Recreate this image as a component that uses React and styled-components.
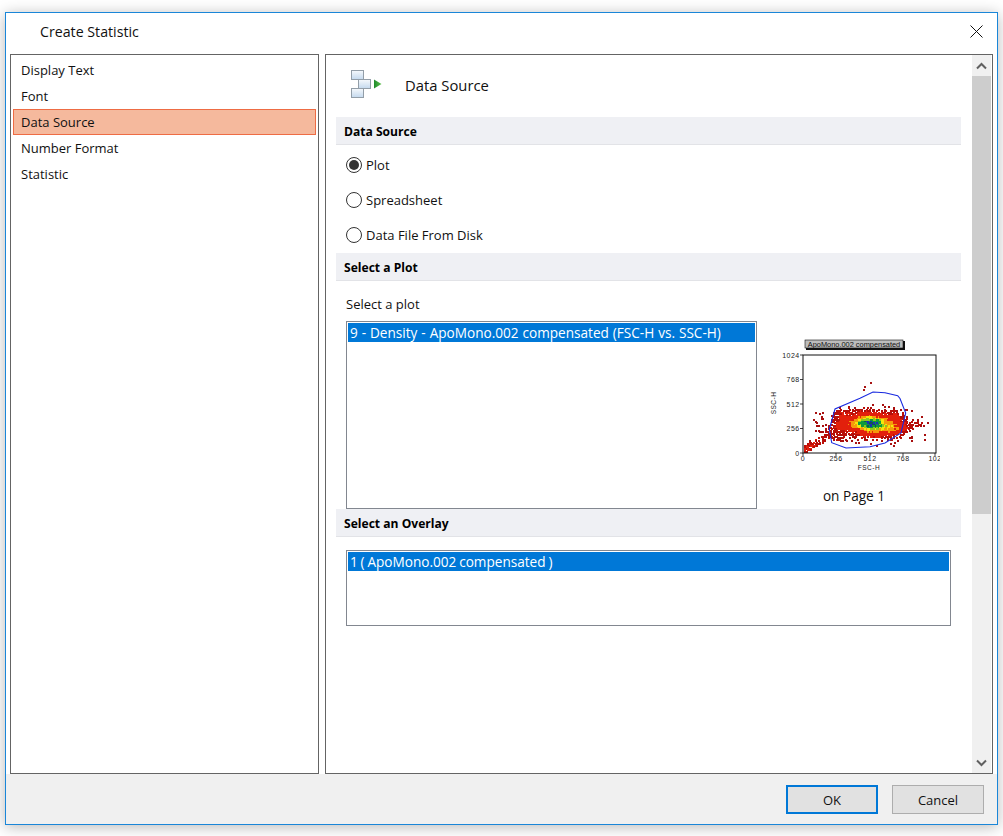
import React, { useMemo } from 'react';
import styled, { createGlobalStyle } from 'styled-components';

const Global = createGlobalStyle`
  html, body {
    margin: 0;
    padding: 0;
    background: #fff;
  }
  body {
    font-family: "Open Sans", "Noto Sans", "Liberation Sans", sans-serif;
    font-size: 13px;
    color: #111;
  }
`;

const Page = styled.div`
  width: 1003px;
  height: 836px;
  padding: 12px 0 0 5px;
  box-sizing: border-box;
  overflow: hidden;
`;

const Dialog = styled.div`
  width: 993px;
  height: 813px;
  box-sizing: border-box;
  border: 1px solid #1a86d8;
  background: #fff;
  box-shadow: 0 2px 14px rgba(0, 0, 0, 0.28);
  display: flex;
  flex-direction: column;
`;

const TitleBar = styled.div`
  height: 41px;
  box-sizing: border-box;
  flex: none;
  display: flex;
  align-items: center;
  justify-content: space-between;
  padding: 0 14px 4px 34px;
  font-size: 14.2px;
`;

const Body = styled.div`
  flex: none;
  height: 720px;
  display: flex;
  gap: 6px;
  padding: 0 4px;
`;

const NavList = styled.div`
  width: 309px;
  box-sizing: border-box;
  border: 1px solid #646464;
  padding: 2px;
`;

const NavItem = styled.div`
  height: 26px;
  box-sizing: border-box;
  display: flex;
  align-items: center;
  padding-left: 7px;
  border: 1px solid ${p => (p.$active ? '#ee6c44' : 'transparent')};
  background: ${p => (p.$active ? '#f5b99d' : 'transparent')};
`;

const Panel = styled.div`
  width: 668px;
  box-sizing: border-box;
  border: 1px solid #646464;
  display: flex;
`;

const Content = styled.div`
  flex: 1;
  min-width: 0;
  padding: 0 11px 0 10px;
`;

const PanelHeading = styled.div`
  height: 62px;
  box-sizing: border-box;
  display: flex;
  align-items: center;
  gap: 22px;
  padding: 0 0 2px 15px;
  font-size: 14.8px;
`;

const SectionHeader = styled.div`
  height: 28px;
  box-sizing: border-box;
  display: flex;
  align-items: center;
  padding: 1px 0 0 8px;
  background: #eff0f4;
  border-bottom: 1px solid #e2e3e7;
  font-weight: 700;
  font-size: 12.1px;
  color: #000;
`;

const RadioGroup = styled.div`
  padding: 2px 0 1px 10px;
`;

const RadioRow = styled.div`
  height: 35px;
  display: flex;
  align-items: center;
  gap: 4px;
`;

const RadioMark = styled.span`
  width: 16px;
  height: 16px;
  box-sizing: border-box;
  border: 1px solid #333;
  border-radius: 50%;
  background: #fff;
  display: flex;
  align-items: center;
  justify-content: center;
  &::after {
    content: '';
    width: 10px;
    height: 10px;
    border-radius: 50%;
    background: ${p => (p.$checked ? '#333' : 'transparent')};
  }
`;

const FieldLabel = styled.div`
  height: 20px;
  line-height: 20px;
  margin: 13px 0 7px 10px;
`;

const PlotRow = styled.div`
  display: flex;
  padding-left: 10px;
`;

const ListBox = styled.div`
  width: ${p => p.$width}px;
  height: ${p => p.$height}px;
  box-sizing: border-box;
  flex: none;
  border: 1px solid #828790;
  padding: 1px;
  background: #fff;
`;

const ListRow = styled.div`
  height: 19px;
  line-height: 19px;
  padding-left: 2px;
  font-size: 13.6px;
  word-spacing: ${p => p.$wordGap}px;
  background: #0078d7;
  color: #fff;
  white-space: nowrap;
  overflow: hidden;
`;

const Preview = styled.div`
  width: 172px;
  margin-left: 11px;
  flex: none;
  display: flex;
  flex-direction: column;
  align-items: center;
  padding-top: 9px;
`;

const PlotCaption = styled.div`
  margin-top: 16px;
  line-height: 20px;
  font-size: 13.6px;
`;

const OverlayWrap = styled.div`
  padding: 13px 0 0 10px;
`;

const ScrollBar = styled.div`
  width: 19px;
  margin-right: 1px;
  flex: none;
  background: #f0f0f0;
  display: flex;
  flex-direction: column;
`;

const ScrollButton = styled.div`
  height: 21px;
  flex: none;
  display: flex;
  align-items: center;
  justify-content: center;
`;

const ScrollThumb = styled.div`
  height: 438px;
  flex: none;
  background: #cdcdcd;
`;

const ScrollTrack = styled.div`
  flex: 1;
`;

const Footer = styled.div`
  flex: 1;
  background: #f0f0f0;
  display: flex;
  justify-content: flex-end;
  align-items: flex-start;
  gap: 14px;
  padding: 11px 13px 0 0;
`;

const Button = styled.div`
  width: 92px;
  height: 29px;
  box-sizing: border-box;
  display: flex;
  align-items: center;
  justify-content: center;
  background: #e1e1e1;
  border: ${p => (p.$primary ? '2px solid #0078d7' : '1px solid #adadad')};
`;

function rng(seed) {
  let a = seed;
  return () => {
    a = (a + 0x6d2b79f5) | 0;
    let t = Math.imul(a ^ (a >>> 15), 1 | a);
    t = (t + Math.imul(t ^ (t >>> 7), 61 | t)) ^ t;
    return ((t ^ (t >>> 14)) >>> 0) / 4294967296;
  };
}

function densityCells() {
  const rand = rng(23);
  const cells = [];
  const step = 1.5;
  const tilt = 0.06;
  for (let x = 804; x < 934.5; x += step) {
    for (let y = 356; y < 451.5; y += step) {
      const dx = x - 871;
      const dy = y - 423;
      const u = dx * Math.cos(tilt) + dy * Math.sin(tilt);
      const v = -dx * Math.sin(tilt) + dy * Math.cos(tilt);
      // slow wobble keeps the outline of the cloud from looking like a clean oval
      const wobble = Math.sin(x * 0.23) * 0.06 + Math.cos(y * 0.4 + x * 0.1) * 0.07;
      const r = Math.sqrt((u * u) / (42 * 42) + (v * v) / (15 * 15)) + (rand() - 0.5) * 0.14 + wobble * Math.min(1, Math.abs(dx) / 25);
      let fill = null;
      if (r < 0.15) fill = rand() < 0.55 ? '#1a2fb8' : '#0d5a50';
      else if (r < 0.27) fill = '#0f9a3c';
      else if (r < 0.33) fill = '#8cc820';
      else if (r < 0.41) fill = '#f5e60a';
      else if (r < 0.54) fill = '#f59a0a';
      else if (r < 0.82) fill = '#e2200c';
      else if (r < 1.06 && rand() < 1.45 - r) fill = '#b80f0a';
      else if (r < 1.4 && rand() < 0.07) fill = '#a80f0f';
      else if (r < 3 && rand() < 0.003) fill = '#a81414';
      // shoulder of dim events left of the main cloud
      const sx = (x - 835) / 11;
      const sy = (y - 431) / 8;
      if (!fill && sx * sx + sy * sy < 1 && rand() < 0.45) fill = '#b80f0a';
      // tail of events towards the origin
      const tx = (x - 803) / 26;
      const line = 449 - tx * 15;
      if (!fill && tx < 1 && Math.abs(y - line) < 5 - tx * 2 && rand() < 0.95 - tx * 0.6) {
        fill = tx < 0.45 && rand() < 0.6 ? '#e2200c' : '#b80f0a';
      }
      if (fill) cells.push({ x, y, fill });
    }
  }
  return cells;
}

const gate = '873,392 885,392.7 897.7,395.7 900,398.5 905.7,413 901,433 885,443 870,446.7 846,448 831.7,442.7 829.3,429.3 835,409 860,398.3';
const yTicks = [[355, '1024'], [379.5, '768'], [404, '512'], [428.5, '256'], [453, '0']];
const xTicks = [[803, '0'], [836, '256'], [870, '512'], [903, '768'], [935, '102']];
const plotFont = 'Liberation Sans, sans-serif';

function DensityPlot() {
  const cells = useMemo(densityCells, []);
  return (
    <svg width="172" height="140" viewBox="768 330 172 140">
      <rect x="806" y="341" width="99" height="9" fill="#111" />
      <rect x="805" y="340" width="98" height="8" fill="#bdbdbd" stroke="#111" strokeWidth="0.6" />
      <text x="854" y="346.8" fontSize="7.4" fontFamily={plotFont} textAnchor="middle" fill="#111">ApoMono.002 compensated</text>
      {cells.map((c, i) => (
        <rect key={i} x={c.x} y={c.y} width="2" height="2" fill={c.fill} shapeRendering="crispEdges" />
      ))}
      <polygon points={gate} fill="none" stroke="#1a2be0" strokeWidth="1.1" />
      <rect x="803" y="355" width="133" height="98" fill="none" stroke="#111" strokeWidth="1" />
      {yTicks.map(([y, label]) => (
        <g key={label}>
          <line x1="800" x2="803" y1={y} y2={y} stroke="#111" strokeWidth="0.8" />
          <text x="799.5" y={y + 2.5} fontSize="7" letterSpacing="0.4" fontFamily={plotFont} textAnchor="end" fill="#222">{label}</text>
        </g>
      ))}
      {xTicks.map(([x, label]) => (
        <g key={label}>
          <line x1={x} x2={x} y1="453" y2="456" stroke="#111" strokeWidth="0.8" />
          <text x={x} y="461" fontSize="7" letterSpacing="0.4" fontFamily={plotFont} textAnchor="middle" fill="#222">{label}</text>
        </g>
      ))}
      <text x="869" y="469.5" fontSize="6.5" fontFamily={plotFont} textAnchor="middle" fill="#222" letterSpacing="0.5">FSC-H</text>
      <text transform="translate(776 403) rotate(-90)" fontSize="6.5" fontFamily={plotFont} textAnchor="middle" fill="#222" letterSpacing="0.5">SSC-H</text>
    </svg>
  );
}

function SourceIcon() {
  const box = (x, y) => (
    <rect x={x + 0.5} y={y + 0.5} width="12" height="9" fill="url(#boxFill)" stroke="#939ea8" />
  );
  return (
    <svg width="32" height="30" viewBox="0 0 32 30">
      <defs>
        <linearGradient id="boxFill" x1="0" y1="0" x2="0" y2="1">
          <stop offset="0" stopColor="#f6f9fc" />
          <stop offset="1" stopColor="#c4d9ee" />
        </linearGradient>
        <linearGradient id="arrowFill" x1="0" y1="0" x2="1" y2="0">
          <stop offset="0" stopColor="#1f8a2c" />
          <stop offset="1" stopColor="#5cc04a" />
        </linearGradient>
      </defs>
      {box(0, 0)}
      {box(7, 9)}
      {box(0, 18)}
      <path d="M23 9.5 L30.5 14 L23 18.5 Z" fill="url(#arrowFill)" />
    </svg>
  );
}

const Chevron = ({ up }) => (
  <svg width="11" height="8" viewBox="0 0 11 8">
    <path d={up ? 'M1 6.5 L5.5 2 L10 6.5' : 'M1 1.5 L5.5 6 L10 1.5'} fill="none" stroke="#606060" strokeWidth="2" />
  </svg>
);

const navItems = ['Display Text', 'Font', 'Data Source', 'Number Format', 'Statistic'];
const sources = ['Plot', 'Spreadsheet', 'Data File From Disk'];

export default function App() {
  return (
    <Page>
      <Global />
      <Dialog>
        <TitleBar>
          <span>Create Statistic</span>
          <svg width="13" height="13" viewBox="0 0 13 13">
            <path d="M0.5 0.5 L12.5 12.5 M12.5 0.5 L0.5 12.5" stroke="#111" strokeWidth="1" />
          </svg>
        </TitleBar>
        <Body>
          <NavList>
            {navItems.map(item => (
              <NavItem key={item} $active={item === 'Data Source'}>{item}</NavItem>
            ))}
          </NavList>
          <Panel>
            <Content>
              <PanelHeading>
                <SourceIcon />
                <span>Data Source</span>
              </PanelHeading>
              <SectionHeader>Data Source</SectionHeader>
              <RadioGroup>
                {sources.map(s => (
                  <RadioRow key={s}>
                    <RadioMark $checked={s === 'Plot'} />
                    {s}
                  </RadioRow>
                ))}
              </RadioGroup>
              <SectionHeader>Select a Plot</SectionHeader>
              <FieldLabel>Select a plot</FieldLabel>
              <PlotRow>
                <ListBox $width={411} $height={188}>
                  <ListRow $wordGap={0.4}>9 - Density - ApoMono.002 compensated (FSC-H vs. SSC-H)</ListRow>
                </ListBox>
                <Preview>
                  <DensityPlot />
                  <PlotCaption>on Page 1</PlotCaption>
                </Preview>
              </PlotRow>
              <SectionHeader>Select an Overlay</SectionHeader>
              <OverlayWrap>
                <ListBox $width={605} $height={76}>
                  <ListRow $wordGap={-0.7}>1 ( ApoMono.002 compensated )</ListRow>
                </ListBox>
              </OverlayWrap>
            </Content>
            <ScrollBar>
              <ScrollButton><Chevron up /></ScrollButton>
              <ScrollThumb />
              <ScrollTrack />
              <ScrollButton><Chevron /></ScrollButton>
            </ScrollBar>
          </Panel>
        </Body>
        <Footer>
          <Button $primary>OK</Button>
          <Button>Cancel</Button>
        </Footer>
      </Dialog>
    </Page>
  );
}
